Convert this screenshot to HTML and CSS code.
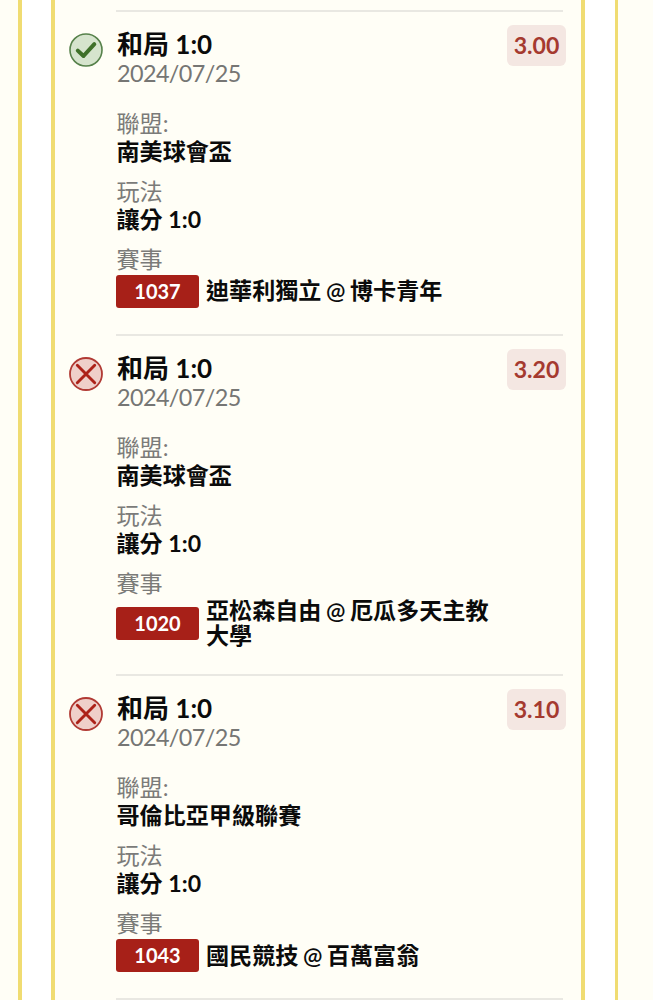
FILE: index.html
```html
<!DOCTYPE html>
<html lang="zh-Hant">
<head>
  <meta charset="UTF-8">
  <meta name="viewport" content="width=device-width, initial-scale=1.0">
  <title>投注紀錄</title>
  <link rel="stylesheet" href="styles.css">
</head>
<body>

  <svg class="sprite">
    <symbol id="win" viewBox="0 0 34 34">
      <circle cx="17" cy="17" r="16" fill="#d6e4cd" stroke="#56814a" stroke-width="1.6"/>
      <path d="M8.8 17.6 L14.5 23 L25.3 11.2" fill="none" stroke="#3f7029" stroke-width="4" stroke-linecap="round" stroke-linejoin="round"/>
    </symbol>
    <symbol id="lose" viewBox="0 0 34 34">
      <circle cx="17" cy="17" r="16" fill="#efcfc9" stroke="#b13a34" stroke-width="1.8"/>
      <path d="M8.3 8.2 L25.7 25.8 M25.7 8.2 L8.3 25.8" fill="none" stroke="#ad2219" stroke-width="2.9" stroke-linecap="round"/>
    </symbol>
  </svg>

  <div class="panel">
    <div class="card">

      <div class="bet">
        <svg class="status"><use href="#win"/></svg>
        <div class="bet-body">
          <div class="head">
            <div>
              <div class="pick">和局 1:0</div>
              <div class="date">2024/07/25</div>
            </div>
            <div class="odds">3.00</div>
          </div>
          <div class="field">
            <div class="label">聯盟:</div>
            <div class="value">南美球會盃</div>
          </div>
          <div class="field">
            <div class="label">玩法</div>
            <div class="value">讓分 1:0</div>
          </div>
          <div class="field">
            <div class="label">賽事</div>
            <div class="match">
              <span class="code">1037</span>
              <span class="teams">迪華利獨立 @ 博卡青年</span>
            </div>
          </div>
        </div>
      </div>

      <div class="bet">
        <svg class="status"><use href="#lose"/></svg>
        <div class="bet-body">
          <div class="head">
            <div>
              <div class="pick">和局 1:0</div>
              <div class="date">2024/07/25</div>
            </div>
            <div class="odds">3.20</div>
          </div>
          <div class="field">
            <div class="label">聯盟:</div>
            <div class="value">南美球會盃</div>
          </div>
          <div class="field">
            <div class="label">玩法</div>
            <div class="value">讓分 1:0</div>
          </div>
          <div class="field">
            <div class="label">賽事</div>
            <div class="match">
              <span class="code">1020</span>
              <span class="teams">亞松森自由 @ 厄瓜多天主教大學</span>
            </div>
          </div>
        </div>
      </div>

      <div class="bet">
        <svg class="status"><use href="#lose"/></svg>
        <div class="bet-body">
          <div class="head">
            <div>
              <div class="pick">和局 1:0</div>
              <div class="date">2024/07/25</div>
            </div>
            <div class="odds">3.10</div>
          </div>
          <div class="field">
            <div class="label">聯盟:</div>
            <div class="value">哥倫比亞甲級聯賽</div>
          </div>
          <div class="field">
            <div class="label">玩法</div>
            <div class="value">讓分 1:0</div>
          </div>
          <div class="field">
            <div class="label">賽事</div>
            <div class="match">
              <span class="code">1043</span>
              <span class="teams">國民競技 @ 百萬富翁</span>
            </div>
          </div>
        </div>
      </div>

      <div class="bet-end"></div>
    </div>
  </div>

</body>
</html>
```
FILE: styles.css
```css
* {
  box-sizing: border-box;
}
body {
  margin: 0;
  height: 1000px;
  overflow: hidden;
  background: #fffef6;
  font-family: Lato, "Noto Sans CJK TC", sans-serif;
  font-size: 23.1px;
  color: #0b0b0b;
}
.sprite {
  display: none;
}
.panel {
  height: 1000px;
  margin: 0 35px 0 18px;
  padding: 0 30px 0 29px;
  background: #fff;
  border-left: 4px solid #f0dc72;
  border-right: 3px solid #f0dc72;
}
.card {
  height: 1000px;
  padding: 10px 18px 0 14px;
  background: #fffef6;
  border-left: 4px solid #f0dc72;
  border-right: 4px solid #f0dc72;
}
.bet {
  display: flex;
  gap: 13px;
}
.status {
  flex: none;
  width: 34px;
  height: 34px;
  margin-top: 22.5px;
}
.bet-body {
  flex: 1;
  border-top: 2px solid #e9e8e2;
  padding: 16px 0 26px;
}
.head {
  display: flex;
  justify-content: space-between;
  height: 81px;
}
.pick {
  padding-left: 1px;
  font-size: 26px;
  font-weight: 700;
  line-height: 33px;
}
.date {
  padding-left: 1px;
  font-size: 23.4px;
  letter-spacing: -0.6px;
  line-height: 24px;
  color: #767674;
}
.odds {
  width: 59px;
  height: 41px;
  margin: -3px -3px 0 0;
  border-radius: 6px;
  background: #f4e7e2;
  color: #a53a30;
  font-weight: 700;
  line-height: 41px;
  text-align: center;
}
.field + .field {
  margin-top: 12px;
}
.label {
  height: 28px;
  padding-left: 0.5px;
  line-height: 28px;
  color: #7b7b79;
}
.value {
  height: 28px;
  padding-left: 0.5px;
  line-height: 28px;
  font-weight: 700;
}
.match {
  display: flex;
  align-items: center;
  gap: 7px;
  min-height: 35px;
  padding-top: 1px;
}
.code {
  flex: none;
  width: 83px;
  height: 33px;
  border-radius: 3px;
  background: #a72018;
  color: #fff;
  font-size: 20px;
  font-weight: 700;
  line-height: 33px;
  text-align: center;
}
.teams {
  width: 290px;
  font-weight: 600;
  line-height: 25.2px;
  word-spacing: -1.2px;
}
.bet-end {
  margin-left: 47px;
  border-top: 2px solid #e9e8e2;
}
```
